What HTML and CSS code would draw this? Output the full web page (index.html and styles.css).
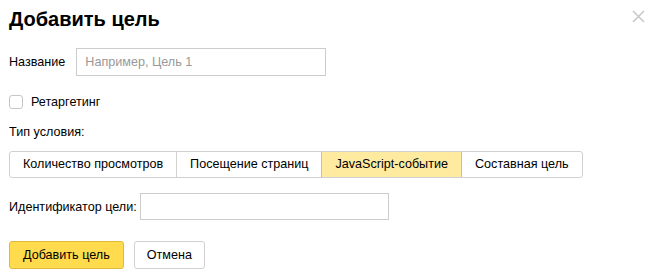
FILE: index.html
```html
<!DOCTYPE html>
<html lang="ru">
  <head>
    <meta charset="UTF-8" />
    <title>Добавить цель</title>
    <link rel="stylesheet" href="styles.css">
  </head>
  <body>
    <div class="dialog">
      <div class="head">
        <h1>Добавить цель</h1>
        <span class="close">
          <svg width="13" height="13" viewBox="0 0 13 13"><path d="M1 1L12 12M12 1L1 12" stroke="#c9c9c9" stroke-width="1.6" /></svg>
        </span>
      </div>

      <div class="row nameRow">
        <label class="label">Название</label>
        <input class="input nameInput" type="text" placeholder="Например, Цель 1" />
      </div>

      <label class="check">
        <span class="box"></span>
        <span>Ретаргетинг</span>
      </label>

      <div class="typeTitle">Тип условия:</div>

      <div class="tabs">
        <span class="tab">Количество просмотров</span>
        <span class="tab">Посещение страниц</span>
        <span class="tab active">JavaScript-событие</span>
        <span class="tab">Составная цель</span>
      </div>

      <div class="row idRow">
        <label class="label">Идентификатор цели:</label>
        <input class="input idInput" type="text" />
      </div>

      <div class="buttons">
        <button class="btn primary">Добавить цель</button>
        <button class="btn">Отмена</button>
      </div>
    </div>
  </body>
</html>
```

FILE: styles.css
```css
* {
  margin: 0;
  padding: 0;
  box-sizing: border-box;
}
body {
  background: #fff;
  font-family: "Liberation Sans", Arial, sans-serif;
  font-size: 12.6px;
  color: #000;
}
.dialog {
  padding: 7px 9px 0 9px;
  width: 654px;
}
.head {
  display: flex;
  justify-content: space-between;
  align-items: flex-start;
}
.head h1 {
  font-size: 20px;
  font-weight: bold;
  line-height: 24px;
}
.close {
  margin: 3px 0 0 0;
  display: block;
  width: 13px;
  height: 13px;
}
.row {
  display: flex;
  align-items: center;
}
.nameRow {
  margin-top: 17px;
}
.label {
  margin-right: 11px;
}
.idRow .label {
  margin-right: 3px;
}
.input {
  height: 28px;
  border: 1px solid #ccc;
  padding: 0 8px;
  font-family: inherit;
  font-size: 12.6px;
  outline: none;
}
.input::placeholder {
  color: #999;
}
.nameInput {
  width: 250px;
}
.idInput {
  width: 249px;
  height: 27px;
}
.check {
  display: flex;
  align-items: center;
  margin-top: 19px;
}
.box {
  width: 14px;
  height: 14px;
  border: 1px solid #c6c6c6;
  border-radius: 3px;
  margin-right: 8px;
}
.typeTitle {
  margin-top: 16px;
  line-height: 15px;
}
.tabs {
  display: inline-flex;
  margin-top: 11px;
  border: 1px solid #d0d0d0;
  border-radius: 3px;
  overflow: hidden;
}
.tab {
  height: 25px;
  line-height: 25px;
  padding: 0 13px;
  border-left: 1px solid #d0d0d0;
}
.tab:first-child {
  border-left: none;
}
.tab.active {
  background: #ffeba0;
  border-left-color: #d6c17a;
  border-right: 1px solid #d6c17a;
}
.tab.active + .tab {
  border-left: none;
}
.idRow {
  margin-top: 15px;
}
.buttons {
  display: flex;
  gap: 10px;
  margin-top: 21px;
}
.btn {
  height: 28px;
  padding: 0 12px;
  border: 1px solid #d0d0d0;
  border-radius: 3px;
  background: #fff;
  font-family: inherit;
  font-size: 12.6px;
  color: #000;
  white-space: nowrap;
}
.btn.primary {
  background: #ffdb4d;
  border-color: #e0b93a;
  padding: 0 13px;
}
```
